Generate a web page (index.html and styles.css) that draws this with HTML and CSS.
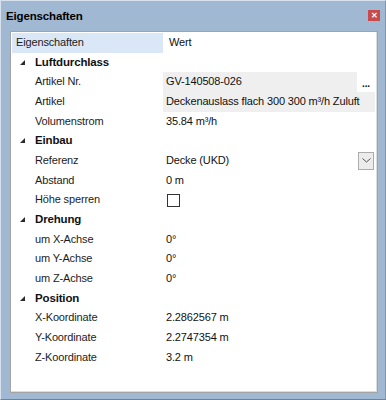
FILE: index.html
```html
<!DOCTYPE html>
<html lang="de">

<head>
    <meta charset="UTF-8">
    <title>Eigenschaften</title>
    <link rel="stylesheet" href="styles.css">
</head>

<body>
    <div class="window">
        <div class="titlebar">
            <span class="title">Eigenschaften</span>
            <span class="close">&#x2715;</span>
        </div>
        <div class="panel">
            <div class="row head">
                <div class="name">Eigenschaften</div>
                <div class="value">Wert</div>
            </div>

            <div class="row cat">
                <div class="name"><svg class="arrow" width="5" height="5"><polygon points="5,0 5,5 0,5" /></svg>Luftdurchlass</div>
                <div class="value"></div>
            </div>
            <div class="row">
                <div class="name">Artikel Nr.</div>
                <div class="value field"><span class="text">GV-140508-026</span><span class="dots">...</span></div>
            </div>
            <div class="row">
                <div class="name">Artikel</div>
                <div class="value field"><span class="text">Deckenauslass flach 300 300 m³/h Zuluft</span></div>
            </div>
            <div class="row">
                <div class="name">Volumenstrom</div>
                <div class="value">35.84 m³/h</div>
            </div>

            <div class="row cat">
                <div class="name"><svg class="arrow" width="5" height="5"><polygon points="5,0 5,5 0,5" /></svg>Einbau</div>
                <div class="value"></div>
            </div>
            <div class="row">
                <div class="name">Referenz</div>
                <div class="value combo"><span class="text">Decke (UKD)</span>
                    <span class="drop"><svg width="9" height="5"><polyline points="0.5,0.5 4.5,4 8.5,0.5" /></svg></span>
                </div>
            </div>
            <div class="row">
                <div class="name">Abstand</div>
                <div class="value">0 m</div>
            </div>
            <div class="row">
                <div class="name">Höhe sperren</div>
                <div class="value"><span class="check"></span></div>
            </div>

            <div class="row cat">
                <div class="name"><svg class="arrow" width="5" height="5"><polygon points="5,0 5,5 0,5" /></svg>Drehung</div>
                <div class="value"></div>
            </div>
            <div class="row">
                <div class="name">um X-Achse</div>
                <div class="value">0°</div>
            </div>
            <div class="row">
                <div class="name">um Y-Achse</div>
                <div class="value">0°</div>
            </div>
            <div class="row">
                <div class="name">um Z-Achse</div>
                <div class="value">0°</div>
            </div>

            <div class="row cat">
                <div class="name"><svg class="arrow" width="5" height="5"><polygon points="5,0 5,5 0,5" /></svg>Position</div>
                <div class="value"></div>
            </div>
            <div class="row">
                <div class="name">X-Koordinate</div>
                <div class="value">2.2862567 m</div>
            </div>
            <div class="row">
                <div class="name">Y-Koordinate</div>
                <div class="value">2.2747354 m</div>
            </div>
            <div class="row">
                <div class="name">Z-Koordinate</div>
                <div class="value">3.2 m</div>
            </div>
        </div>
    </div>
</body>

</html>
```

FILE: styles.css
```css
html,
body {
    margin: 0;
    padding: 0;
}

body {
    font-family: "Liberation Sans", Arial, sans-serif;
    font-size: 11px;
    letter-spacing: -0.15px;
    color: #1c1c1c;
}

.window {
    box-sizing: border-box;
    display: flex;
    flex-direction: column;
    width: 386px;
    height: 400px;
    background-color: #a0b8d1;
    border-top: 1px solid #d7e2ee;
    border-left: 1px solid #d7e2ee;
    border-right: 1px solid #8196ad;
    border-bottom: 1px solid #6f8298;
}

.titlebar {
    display: flex;
    align-items: center;
    justify-content: space-between;
    height: 30px;
    padding: 0 5px 0 5px;
}

.title {
    font-weight: bold;
    font-size: 11.5px;
    color: #000;
}

.close {
    display: flex;
    align-items: center;
    justify-content: center;
    width: 12px;
    height: 11px;
    margin-top: -1px;
    background-color: #c94a4b;
    color: #fff;
    font-size: 8px;
    font-weight: bold;
}

.panel {
    box-sizing: border-box;
    flex: 1;
    margin: 0 7px 6px 9px;
    padding: 1px 1px 0 1px;
    background-color: #fff;
    border: 1px solid #a3a3a3;
    box-shadow: inset -1px -1px 0 #dcdcdc;
}

.row {
    display: grid;
    grid-template-columns: 151px 1fr;
    height: 19.7px;
}

.name,
.value {
    box-sizing: border-box;
    display: flex;
    align-items: center;
    padding-bottom: 2px;
    white-space: nowrap;
}

.name {
    padding-left: 23px;
}

.value {
    padding-left: 3px;
    color: #111;
}

.head .name {
    padding-left: 4px;
    background-color: #d9e7f6;
}

.head .value {
    padding-left: 6px;
}

.cat .name {
    padding-left: 8px;
    font-weight: bold;
    font-size: 11.5px;
    color: #111;
}

.arrow {
    margin-right: 10px;
    margin-top: 1px;
    fill: #2a2a2a;
}

.field {
    padding-left: 0;
    padding-bottom: 0;
    margin-right: 1px;
}

.field .text {
    box-sizing: border-box;
    display: flex;
    align-items: center;
    flex: 1;
    height: 100%;
    padding-left: 3px;
    padding-bottom: 2px;
    background-color: #efefef;
}

.dots {
    width: 18px;
    text-align: center;
    font-weight: bold;
    font-size: 10px;
    line-height: 10px;
    margin-top: 4px;
}

.combo {
    justify-content: space-between;
    padding-bottom: 0;
}

.combo .text {
    padding-bottom: 2px;
}

.drop {
    box-sizing: border-box;
    display: flex;
    align-items: center;
    justify-content: center;
    width: 16px;
    height: 18px;
    margin-right: 2px;
    background-color: #ececec;
    border: 1px solid #acacac;
}

.drop polyline {
    fill: none;
    stroke: #555;
    stroke-width: 1;
}

.check {
    box-sizing: border-box;
    width: 13px;
    height: 13px;
    margin-left: 1px;
    margin-top: 2px;
    border: 1px solid #333;
    background-color: #fff;
}
```
